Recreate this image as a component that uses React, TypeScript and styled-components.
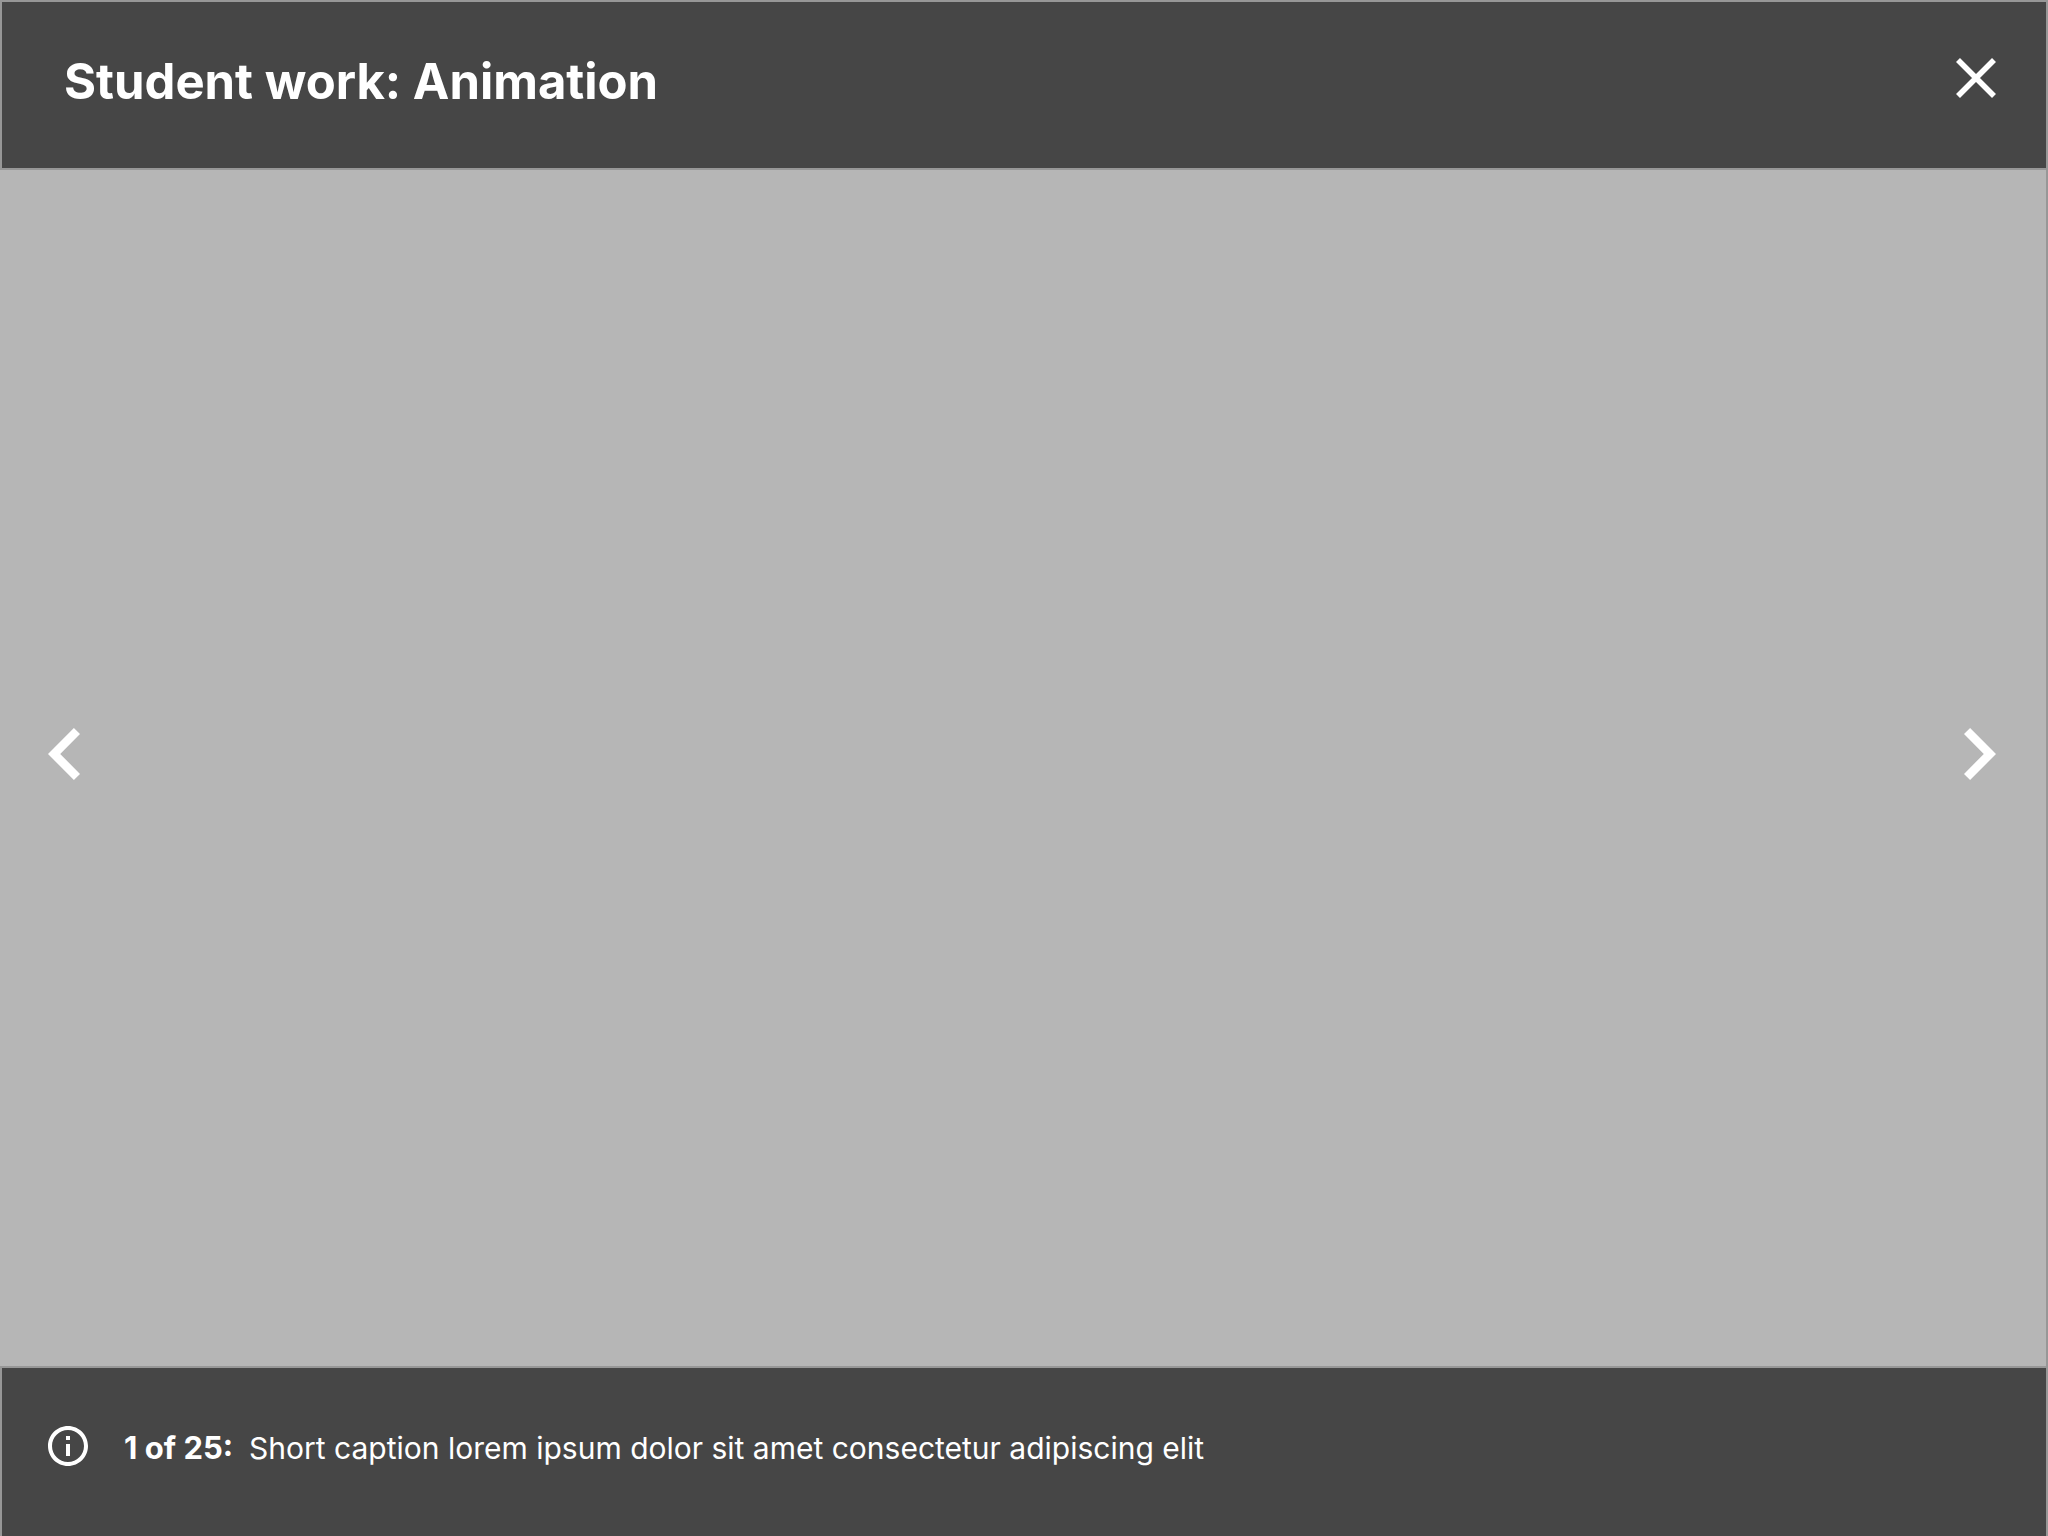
import React from 'react';
import styled, { createGlobalStyle } from 'styled-components';

const GlobalStyle = createGlobalStyle`
  *, *::before, *::after {
    box-sizing: border-box;
  }
  body {
    margin: 0;
    background: #464646;
    color: #ffffff;
    font-family: Inter, "Liberation Sans", sans-serif;
  }
`;

const Viewer = styled.main`
  display: flex;
  flex-direction: column;
  min-height: 100vh;
`;

const Header = styled.header`
  display: flex;
  justify-content: space-between;
  align-items: flex-start;
  height: 170px;
  padding: 48px 46px 0 62px;
  background: #464646;
  border: 2px solid #979797;
`;

const Title = styled.h1`
  margin: 0;
  font-size: 49px;
  line-height: 64px;
  font-weight: 700;
`;

const IconButton = styled.button`
  display: flex;
  align-items: center;
  justify-content: center;
  padding: 0;
  border: 0;
  background: none;
  color: inherit;
  cursor: pointer;
`;

const CloseButton = styled(IconButton)`
  width: 48px;
  height: 56px;
`;

const Stage = styled.section`
  display: flex;
  flex: 1;
  align-items: center;
  justify-content: space-between;
  padding: 0 50px 28px 48px;
  background: #b6b6b6;
  border-right: 2px solid #979797;
`;

const Footer = styled.footer`
  display: flex;
  align-items: flex-start;
  height: 170px;
  padding: 54px 42px 0;
  background: #464646;
  border: solid #979797;
  border-width: 2px 2px 0;
`;

const Caption = styled.p`
  display: flex;
  align-items: baseline;
  gap: 16px;
  margin: 0 0 0 32px;
  font-size: 30px;
  line-height: 52px;
`;

const Count = styled.strong`
  font-size: 31px;
  font-weight: 700;
`;

const CloseIcon = () => (
  <svg width="40" height="40" viewBox="0 0 40 40" fill="none" stroke="currentColor" strokeWidth="5.6" aria-hidden="true">
    <path d="M2 2L38 38M38 2L2 38" />
  </svg>
);

const ChevronIcon = ({ direction }: { direction: 'left' | 'right' }) => (
  <svg width="32" height="52" viewBox="0 0 32 52" fill="currentColor" aria-hidden="true">
    <path
      d={
        direction === 'left'
          ? 'M32 6.1L25.9 0L0 26L25.9 52L32 45.9L12.2 26Z'
          : 'M0 6.1L6.1 0L32 26L6.1 52L0 45.9L19.8 26Z'
      }
    />
  </svg>
);

const InfoIcon = () => (
  <svg width="48" height="48" viewBox="0 0 24 24" fill="currentColor" aria-hidden="true">
    <path d="M11 7h2v2h-2zm0 4h2v6h-2zm1-9C6.48 2 2 6.48 2 12s4.48 10 10 10 10-4.48 10-10S17.52 2 12 2zm0 18c-4.41 0-8-3.59-8-8s3.59-8 8-8 8 3.59 8 8-3.59 8-8 8z" />
  </svg>
);

export default function App() {
  return (
    <>
      <GlobalStyle />
      <Viewer>
        <Header>
          <Title>Student work: Animation</Title>
          <CloseButton type="button" aria-label="Close">
            <CloseIcon />
          </CloseButton>
        </Header>
        <Stage aria-label="Slide">
          <IconButton type="button" aria-label="Previous">
            <ChevronIcon direction="left" />
          </IconButton>
          <IconButton type="button" aria-label="Next">
            <ChevronIcon direction="right" />
          </IconButton>
        </Stage>
        <Footer>
          <IconButton type="button" aria-label="Information">
            <InfoIcon />
          </IconButton>
          <Caption>
            <Count>1 of 25:</Count>
            <span>Short caption lorem ipsum dolor sit amet consectetur adipiscing elit</span>
          </Caption>
        </Footer>
      </Viewer>
    </>
  );
}
